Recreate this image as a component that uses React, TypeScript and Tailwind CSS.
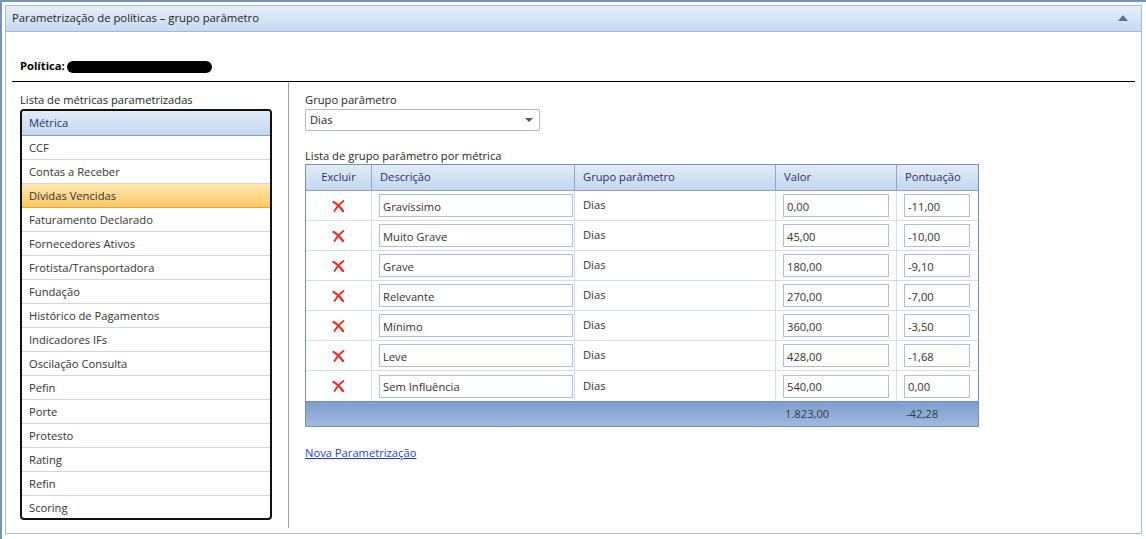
import React from "react";

const metricas = [
  "CCF",
  "Contas a Receber",
  "Dívidas Vencidas",
  "Faturamento Declarado",
  "Fornecedores Ativos",
  "Frotista/Transportadora",
  "Fundação",
  "Histórico de Pagamentos",
  "Indicadores IFs",
  "Oscilação Consulta",
  "Pefin",
  "Porte",
  "Protesto",
  "Rating",
  "Refin",
  "Scoring",
];

const linhas = [
  { desc: "Gravíssimo", valor: "0,00", pont: "-11,00" },
  { desc: "Muito Grave", valor: "45,00", pont: "-10,00" },
  { desc: "Grave", valor: "180,00", pont: "-9,10" },
  { desc: "Relevante", valor: "270,00", pont: "-7,00" },
  { desc: "Mínimo", valor: "360,00", pont: "-3,50" },
  { desc: "Leve", valor: "428,00", pont: "-1,68" },
  { desc: "Sem Influência", valor: "540,00", pont: "0,00" },
];

function RedX() {
  return (
    <svg width="13" height="12" viewBox="0 0 13 12">
      <path d="M1.5 2 C4.5 3.5 8 7 11 11" stroke="#e6342c" strokeWidth="2.4" fill="none" strokeLinecap="round" />
      <path d="M11.5 1 C8.5 3 5 6.5 2.5 11" stroke="#e6342c" strokeWidth="1.8" fill="none" strokeLinecap="round" />
    </svg>
  );
}

function Campo({ value, w }: { value: string; w: string }) {
  return (
    <div className={`${w} h-[23px] border border-[#abc1de] bg-white flex items-center pl-[3px] pt-[3px]`}>
      {value}
    </div>
  );
}

export default function App() {
  return (
    <div
      className="w-[1146px] h-[539px] bg-white border-t-2 border-l-2 border-[#7393b7] pl-[3px] pt-[3px] text-[11.2px] text-[#333]"
      style={{ fontFamily: '"Segoe UI", "Open Sans", sans-serif' }}
    >
      <div className="w-[1137px] h-[529px] border border-[#a9bdd6] flex flex-col">
        {/* cabeçalho */}
        <div className="h-[26px] shrink-0 flex items-center justify-between px-[6px] bg-gradient-to-b from-[#e6eef9] to-[#c7daf1] border-b border-[#a3bad7] text-[#1f1f1f] text-[11.3px]">
          <span>Parametrização de políticas – grupo parâmetro</span>
          <svg width="10" height="6" viewBox="0 0 10 6" className="mr-[7px] mb-[2px]">
            <path d="M0 6 L5 0 L10 6 Z" fill="#5b7191" />
          </svg>
        </div>

        <div className="flex-1 flex flex-col px-[6px]">
          <div className="h-[49px] flex items-end pl-[8px] pb-[6px]">
            <span className="font-bold text-black">Política:</span>
            <span className="ml-[2px] mb-[2px] w-[145px] h-[12px] rounded-full bg-black" />
          </div>
          <div className="h-px bg-black" />

          <div className="flex flex-1 pb-[5px]">
            {/* coluna esquerda */}
            <div className="w-[277px] border-r border-[#a0a0a0] pl-[8px] pt-[10px]">
              <div className="text-[#1f1f1f] leading-[16px]">Lista de métricas parametrizadas</div>
              <div className="mt-[1px] w-[252px] h-[411px] border-2 border-[#111] rounded-[4px] overflow-hidden">
                <div className="h-[25px] flex items-center pl-[7px] pt-px bg-gradient-to-b from-[#e2ebf7] to-[#c4d7ef] border-b border-[#7ea0d0] text-[#1c3a72]">
                  Métrica
                </div>
                {metricas.map((m) => (
                  <div
                    key={m}
                    className={`h-[24px] flex items-center pl-[7px] pt-px border-b ${
                      m === "Dívidas Vencidas"
                        ? "bg-gradient-to-b from-[#fde7b0] to-[#fbc862] border-[#f0a030]"
                        : "border-[#cdd8e8]"
                    }`}
                  >
                    {m}
                  </div>
                ))}
              </div>
            </div>

            {/* coluna direita */}
            <div className="flex-1 pl-[16px] pt-[10px]">
              <div className="text-[#1f1f1f] leading-[16px]">Grupo parâmetro</div>
              <div className="mt-[1px] w-[235px] h-[22px] border border-[#abbcd6] rounded-[2px] flex items-center justify-between pl-[4px] pr-[6px] text-[#1f1f1f]">
                <span>Dias</span>
                <svg width="8" height="4" viewBox="0 0 8 4">
                  <path d="M0 0 L8 0 L4 4 Z" fill="#4a5a70" />
                </svg>
              </div>

              <div className="mt-[17px] text-[#1f1f1f] leading-[16px]">Lista de grupo parâmetro por métrica</div>
              <div className="w-[674px] border border-[#7290bd]">
                <div className="flex h-[26px] bg-gradient-to-b from-[#e2ebf7] to-[#c4d7ef] border-b border-[#8aa6cf] text-[#2f2d6b]">
                  <div className="w-[66px] flex items-center justify-center border-r border-[#8aa6cf]">Excluir</div>
                  <div className="w-[203px] flex items-center pl-[8px] border-r border-[#8aa6cf]">Descrição</div>
                  <div className="w-[201px] flex items-center pl-[8px] border-r border-[#8aa6cf]">Grupo parâmetro</div>
                  <div className="w-[121px] flex items-center pl-[8px] border-r border-[#8aa6cf]">Valor</div>
                  <div className="flex-1 flex items-center pl-[8px]">Pontuação</div>
                </div>
                {linhas.map((l, i) => (
                  <div key={l.desc} className={`flex h-[30px] ${i < linhas.length - 1 ? "border-b border-[#d3ddeb]" : ""}`}>
                    <div className="w-[66px] flex items-center justify-center border-r border-[#d3ddeb]">
                      <RedX />
                    </div>
                    <div className="w-[203px] flex items-center pl-[7px] border-r border-[#d3ddeb]">
                      <Campo value={l.desc} w="w-[194px]" />
                    </div>
                    <div className="w-[201px] flex items-center pl-[8px] border-r border-[#d3ddeb]">Dias</div>
                    <div className="w-[121px] flex items-center pl-[7px] border-r border-[#d3ddeb]">
                      <Campo value={l.valor} w="w-[106px]" />
                    </div>
                    <div className="flex-1 flex items-center pl-[7px]">
                      <Campo value={l.pont} w="w-[66px]" />
                    </div>
                  </div>
                ))}
                <div className="flex h-[25px] bg-gradient-to-b from-[#7f9dcc] to-[#a0badf] border-t border-[#6d8fc4] text-[#2e3a4a]">
                  <div className="w-[471px]" />
                  <div className="w-[121px] flex items-center pl-[8px]">1.823,00</div>
                  <div className="flex-1 flex items-center pl-[8px]">-42,28</div>
                </div>
              </div>

              <a href="#" className="inline-block mt-[18px] text-[#1a3fe0] underline">
                Nova Parametrização
              </a>
            </div>
          </div>
        </div>
      </div>
    </div>
  );
}
